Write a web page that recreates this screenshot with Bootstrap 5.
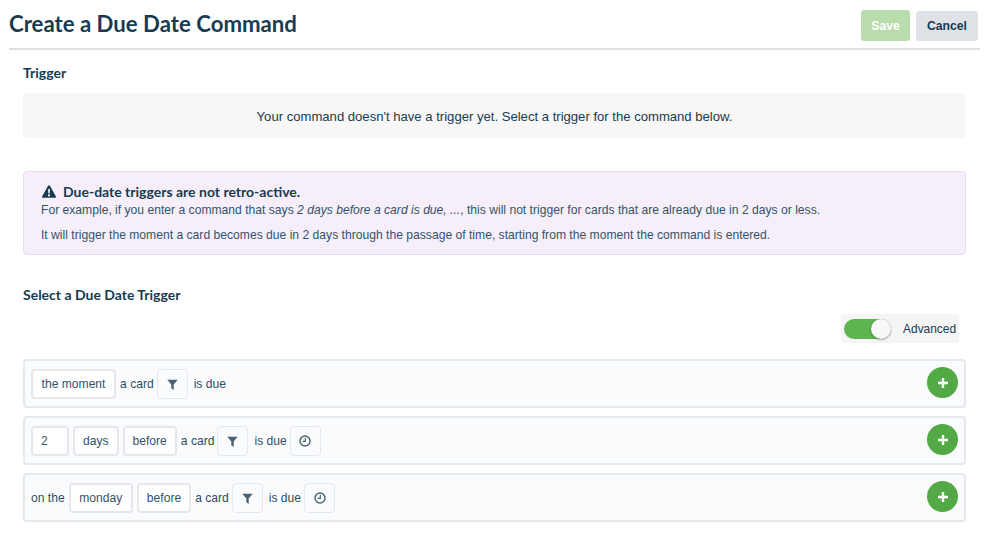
<!DOCTYPE html>
<html lang="en"><head><meta charset="utf-8"><title>Create a Due Date Command</title>
<link href="https://cdn.jsdelivr.net/npm/bootstrap@5.3.0/dist/css/bootstrap.min.css" rel="stylesheet">
<style>
html,body{height:551px;overflow:hidden}
body{background:#fff;color:#173b50;font-family:"Liberation Sans",Arial,sans-serif;font-size:12.1px;line-height:20px}
.lato{font-family:Lato,sans-serif;font-weight:700}
.page-head{margin:0 19px 0 9px;height:50px;border-bottom:2px solid #dedfe0;padding-top:10px}
.page-title{font-size:22.2px;line-height:28px;margin:0;color:#173b50}
.act{font-size:12.2px;font-weight:700;line-height:20px;border-radius:3px;border:0;color:#173b50;padding:0}
.act-save{background:#b8dcab;color:#fff;width:49px;height:31px;margin-right:6px}
.act-cancel{background:#dfe3e8;width:62px;height:30px;margin-right:2px;margin-top:1px}
.body-wrap{margin:0 33px 0 23px}
.sec-title{font-size:14px;line-height:18px;margin:14px 0 11px;color:#173b50}
.empty-box{background:#f7f7f7;border-radius:4px;height:45px;font-size:13.1px;padding-top:2px;display:flex;align-items:center;justify-content:center}
.note{background:#f6effa;border:1px solid #e8daf0;border-radius:4px;height:84px;margin-top:33px;padding:10px 17px 0;color:#34536a;font-size:12.13px;line-height:17px}
.note-title{font-size:14px;line-height:19px;color:#173b50;display:flex;align-items:center;gap:7px;padding-left:1px}
.note p{margin:0 0 9px}
.note p:first-of-type{padding-top:1px;margin-bottom:8px}
.sel-title{font-size:14px;line-height:18px;margin:31px 0 0;color:#173b50}
.adv{width:118px;height:29px;background:#f5f5f5;border-radius:3px;color:#173b50;font-size:11.9px;padding:0 3px 0 3px;margin:10px 7px 16px auto}
.sw{width:47px;height:20px;border-radius:10px;background:#5cb54f;position:relative;display:block}
.sw::after{content:"";position:absolute;right:0;top:0;width:20px;height:20px;border-radius:50%;background:#f8f8f8;box-shadow:0 1px 2px rgba(0,0,0,.35)}
.rule-row{height:49px;border:2px solid #e5e8ec;border-radius:4px;background:#fafbfc;padding:0 6px 0 6px;margin-bottom:8px;gap:4px;color:#2f4e63}
.chip{height:30px;border:2px solid #e4e7eb;border-radius:4px;background:#fff;display:flex;align-items:center;justify-content:center;padding:0 8px;margin-top:1px;color:#34536a}
.chip-wide{padding:0 8.6px}
.chip-num{width:38px;justify-content:flex-start}
.chip-icon{width:31px;border-width:1px;padding:0;background:#fafbfc;margin-left:-1px;margin-right:2px}
.rule-txt{margin-top:1px}
.add{width:31px;height:31px;border:0;border-radius:50%;background:#54a947;padding:0;margin:-2px 0 0 auto;display:flex;align-items:center;justify-content:center}
</style></head><body>
<header class="page-head d-flex justify-content-between align-items-start">
<h1 class="page-title lato">Create a Due Date Command</h1>
<div class="d-flex align-items-start"><button class="act act-save">Save</button><button class="act act-cancel">Cancel</button></div>
</header>
<main class="body-wrap">
<h2 class="sec-title lato">Trigger</h2>
<div class="empty-box">Your command doesn't have a trigger yet. Select a trigger for the command below.</div>
<section class="note">
<div class="note-title lato"><svg width="14" height="13" viewBox="0 0 14 13"><path fill="#173b50" fill-rule="evenodd" d="M7 .3c.4 0 .7.2.9.5l5.900 10.400c.4.7-.1 1.500-.9 1.500H1.100c-.8 0-1.300-.8-.9-1.500L6.100.8C6.300.5 6.600.3 7 .3ZM6.100 4l.2 4.400h1.400L7.900 4H6.100Zm.9 5.300a1.100 1.100 0 1 0 0 2.200 1.100 1.100 0 0 0 0-2.200Z"/></svg>Due-date triggers are not retro-active.</div>
<p>For example, if you enter a command that says <em>2 days before a card is due, ...</em>, this will not trigger for cards that are already due in 2 days or less.</p>
<p>It will trigger the moment a card becomes due in 2 days through the passage of time, starting from the moment the command is entered.</p>
</section>
<h2 class="sel-title lato">Select a Due Date Trigger</h2>
<div class="adv d-flex align-items-center justify-content-between"><span class="sw"></span><span>Advanced</span></div>
<div class="rule-row d-flex align-items-center"><span class="chip chip-wide">the moment</span><span class="rule-txt">a card</span><span class="chip chip-icon"><svg width="11" height="11" viewBox="0 0 11 11"><path fill="#4a6272" d="M.3.8h10.400L6.700 5.600V11L4.300 9.200V5.600Z"/></svg></span><span class="rule-txt">is due</span><button class="add" aria-label="Add"><svg width="10" height="10" viewBox="0 0 10 10"><path stroke="#fff" stroke-width="2.400" d="M5 0v10M0 5h10"/></svg></button></div>
<div class="rule-row d-flex align-items-center"><span class="chip chip-num">2</span><span class="chip">days</span><span class="chip">before</span><span class="rule-txt">a card</span><span class="chip chip-icon"><svg width="11" height="11" viewBox="0 0 11 11"><path fill="#4a6272" d="M.3.8h10.400L6.700 5.600V11L4.300 9.200V5.600Z"/></svg></span><span class="rule-txt">is due</span><span class="chip chip-icon"><svg width="12" height="12" viewBox="0 0 11 11"><circle cx="5.500" cy="5.500" r="4.600" fill="none" stroke="#4a6272" stroke-width="1.300"/><path fill="none" stroke="#4a6272" stroke-width="1.100" d="M5.800 2.600v3.200H3.300"/></svg></span><button class="add" aria-label="Add"><svg width="10" height="10" viewBox="0 0 10 10"><path stroke="#fff" stroke-width="2.400" d="M5 0v10M0 5h10"/></svg></button></div>
<div class="rule-row d-flex align-items-center"><span class="rule-txt">on the</span><span class="chip chip-wide">monday</span><span class="chip">before</span><span class="rule-txt">a card</span><span class="chip chip-icon"><svg width="11" height="11" viewBox="0 0 11 11"><path fill="#4a6272" d="M.3.8h10.400L6.700 5.600V11L4.300 9.200V5.600Z"/></svg></span><span class="rule-txt">is due</span><span class="chip chip-icon"><svg width="12" height="12" viewBox="0 0 11 11"><circle cx="5.500" cy="5.500" r="4.600" fill="none" stroke="#4a6272" stroke-width="1.300"/><path fill="none" stroke="#4a6272" stroke-width="1.100" d="M5.800 2.600v3.200H3.300"/></svg></span><button class="add" aria-label="Add"><svg width="10" height="10" viewBox="0 0 10 10"><path stroke="#fff" stroke-width="2.400" d="M5 0v10M0 5h10"/></svg></button></div>
</main>
<script src="https://cdn.jsdelivr.net/npm/bootstrap@5.3.0/dist/js/bootstrap.bundle.min.js"></script>
</body></html>
